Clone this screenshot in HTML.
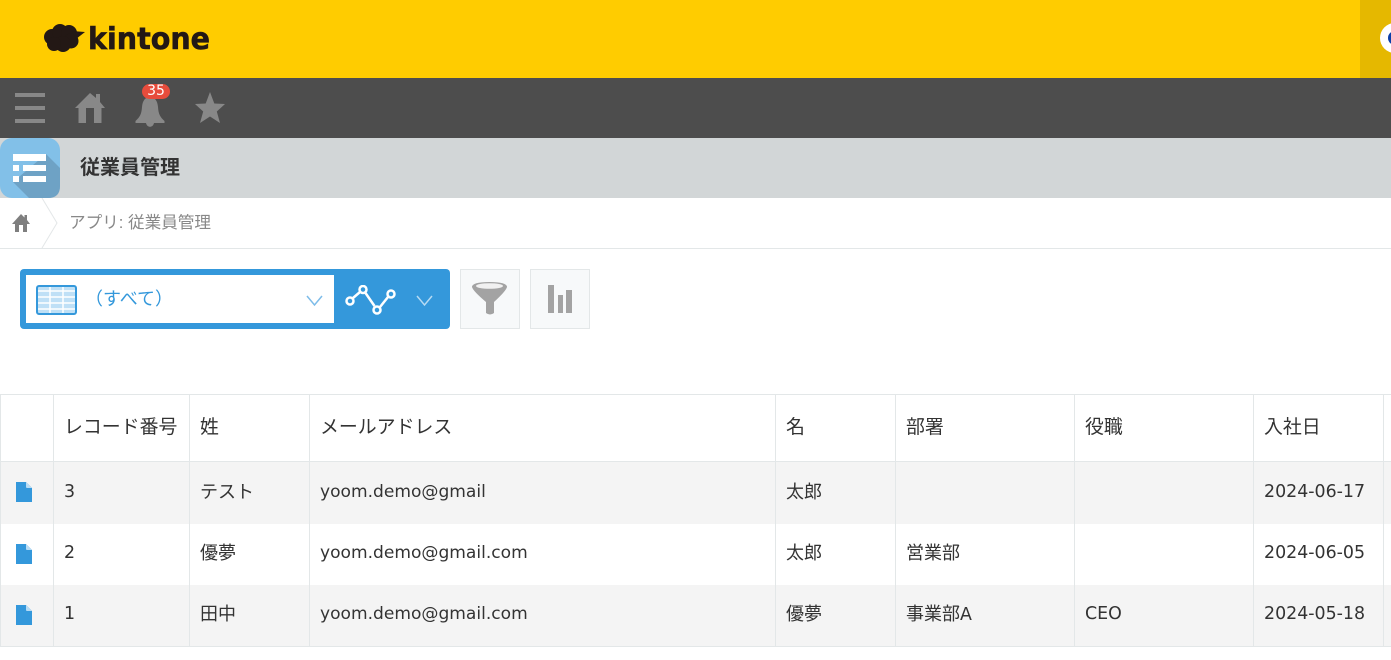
<!DOCTYPE html>
<html lang="ja"><head><meta charset="utf-8"><title>従業員管理</title>
<style>
html,body{margin:0;padding:0;width:1391px;height:660px;overflow:hidden;background:#fff;font-family:"Liberation Sans","Noto Sans CJK JP",sans-serif;color:#333}
.a{position:absolute}
svg{position:absolute;display:block}
table{position:absolute;left:0;top:394px;border-collapse:collapse;table-layout:fixed;width:1391px;font-size:18px;font-family:"DejaVu Sans","Noto Sans CJK JP",sans-serif}
td{border-left:1px solid #e3e7e8;border-right:1px solid #e3e7e8;padding:0 0 0 10px;white-space:nowrap;overflow:hidden;font-weight:400;height:61px;color:#333}
td .l{font-size:17.4px;position:relative;top:-2px}
td .m{font-size:17.07px;position:relative;top:-2px}
td .c{position:relative;top:-3px}
td .c .l{top:0}
tr.f td .c{top:-2px}
tr.h td{height:67px;border-top:1px solid #e3e7e8;border-bottom:1px solid #e3e7e8;font-size:18.9px;padding-bottom:6px;box-sizing:border-box}
tr.f td{height:62px}
tr.o td{background:#f4f4f4}
tr:last-child td{border-bottom:1px solid #e3e7e8}
td:last-child{border-right:0}
td:first-child{position:relative}
</style></head><body>
<div class="a" style="left:0;top:0;width:1391px;height:78px;background:#ffcc00"></div>
<div class="a" style="left:1360px;top:0;width:31px;height:78px;background:#e5b800"></div>
<svg style="left:1360px;top:0" width="31" height="78"><circle cx="35" cy="38" r="15" fill="#fff"/><circle cx="35" cy="38" r="7" fill="#0b3ea8"/></svg>
<svg style="left:40px;top:18px" width="180" height="40" viewBox="0 0 180 40" fill="#231815">
<circle cx="12" cy="19" r="8"/><circle cx="20" cy="14" r="8"/><circle cx="29" cy="15" r="8"/><circle cx="31" cy="23" r="7.500"/><circle cx="23" cy="26" r="8"/><circle cx="14" cy="26" r="7"/>
<path d="M32 13L45 14L36 21Z"/>
<text x="48" y="31" font-family="'DejaVu Sans',sans-serif" font-weight="700" font-size="30" stroke="#231815" stroke-width=".6" textLength="122" lengthAdjust="spacingAndGlyphs">kintone</text></svg>
<div class="a" style="left:0;top:78px;width:1391px;height:60px;background:#4d4d4d"></div>
<svg style="left:0;top:78px" width="240" height="60" fill="#888">
<rect x="15" y="15" width="30" height="4"/><rect x="15" y="28" width="30" height="4"/><rect x="15" y="41" width="30" height="4"/>
<path d="M90 15L96 20V16H100V24L105 30H101.500V45H94V30H86V45H78.500V30H75Z"/>
<path d="M150 19C155 19 157.500 23 158 29C158.500 36 160 39 164.500 43V45H135.500V43C140 39 141.500 36 142 29C142.500 23 145 19 150 19Z"/><path d="M146 45H154C153 50 147 50 146 45Z"/>
<path d="M210 14L214.300 25.500L225 26L216.800 33.500L220 45L210 38.500L200 45L203.200 33.500L195 26L205.700 25.500Z"/>
</svg>
<div class="a" style="left:142px;top:84px;width:28px;height:15px;border-radius:8px;background:#e74c3c;color:#fff;font:14px/15px 'DejaVu Sans',sans-serif;text-align:center">35</div>
<div class="a" style="left:0;top:138px;width:1391px;height:60px;background:#d2d6d7"></div>
<svg style="left:0;top:138px" width="60" height="60">
<rect width="60" height="60" rx="12" fill="#82c0e8"/>
<path d="M46 16L60 30V48Q60 60 48 60H29L13 44Z" fill="#6ea2c5"/>
<g fill="#fff"><rect x="13" y="16" width="33" height="7"/><rect x="13" y="27" width="6" height="6"/><rect x="23" y="27" width="23" height="6"/><rect x="13" y="38" width="6" height="6"/><rect x="23" y="38" width="23" height="6"/></g></svg>
<div class="a" style="left:80px;top:154px;font-size:20px;line-height:29px;font-weight:700;color:#333;white-space:nowrap">従業員管理</div>
<svg style="left:0;top:198px" width="70" height="52">
<path d="M21 16L24.500 19.500V17H27V22L30 26H27V34H23V27H19V34H15V26H12Z" fill="#7f7f7f"/>
<path d="M42 0L57 25L42 50" fill="none" stroke="#e3e7e8" stroke-width="1"/></svg>
<div class="a" style="left:69px;top:211px;font-size:16.600px;line-height:23px;color:#888;white-space:nowrap">アプリ: 従業員管理</div>
<div class="a" style="left:0;top:248px;width:1391px;height:1px;background:#e3e7e8"></div>
<div class="a" style="left:20px;top:269px;width:430px;height:60px;background:#3498db;border-radius:4px"></div>
<div class="a" style="left:26px;top:275px;width:308px;height:48px;background:#fff"></div>
<svg style="left:36px;top:285px" width="41" height="30"><rect x="1" y="1" width="39" height="28" rx="2" fill="#bfe0f6" stroke="#3498db" stroke-width="2"/><path d="M2 6H39M2 12H39M2 18H39M2 24H39M14 2V28M27 2V28" stroke="#fff" stroke-width="1.500"/></svg>
<div class="a" style="left:85px;top:287px;font-size:18px;line-height:25px;color:#3498db;white-space:nowrap">（すべて）</div>
<svg style="left:300px;top:285px" width="140" height="30" fill="none">
<path d="M7 11L14.500 20L22 11" stroke="#7dbce9" stroke-width="1.500"/>
<path d="M117 11L124.500 20L132 11" stroke="#b5daf3" stroke-width="1.500"/>
<g stroke="#fff" stroke-width="2.500"><path d="M53 13L60 7M65.500 8L74.500 21M80 22L88 12"/><circle cx="50" cy="16" r="3.500"/><circle cx="63" cy="4.500" r="3.500"/><circle cx="77" cy="25" r="3.500"/><circle cx="91" cy="9" r="3.500"/></g></svg>
<div class="a" style="left:460px;top:269px;width:58px;height:58px;background:#f7f9fa;border:1px solid #e3e7e8"></div>
<svg style="left:460px;top:269px" width="60" height="60"><path d="M12 18Q12 13 29.500 13Q47 13 47 18Q46 22 34 33V44Q30 47 26 44V33Q13 22 12 18Z" fill="#a3a3a3"/><ellipse cx="29.500" cy="17" rx="13.500" ry="2.800" fill="#f1f1f1"/></svg>
<div class="a" style="left:530px;top:269px;width:58px;height:58px;background:#f7f9fa;border:1px solid #e3e7e8"></div>
<svg style="left:530px;top:269px" width="60" height="60" fill="#a3a3a3"><rect x="18" y="16" width="6" height="28"/><rect x="28" y="26" width="5" height="18"/><rect x="36" y="21" width="6" height="23"/></svg>
<table>
<colgroup><col style="width:53px"><col style="width:136px"><col style="width:120px"><col style="width:466px"><col style="width:120px"><col style="width:179px"><col style="width:179px"><col style="width:130px"><col style="width:8px"></colgroup>
<tr class="h"><td></td><td>レコード番号</td><td>姓</td><td>メールアドレス</td><td>名</td><td>部署</td><td>役職</td><td>入社日</td><td></td></tr>
<tr class="o f"><td><svg style="left:15px;top:20px" width="16" height="20"><path d="M0 0H10L16 6V20H0Z" fill="#3498db"/><path d="M10 0L16 6H11Q10 6 10 5Z" fill="#b8dcf4"/></svg></td><td><span class="l">3</span></td><td><span class="c">テスト</span></td><td><span class="m">yoom.demo@gmail</span></td><td><span class="c">太郎</span></td><td></td><td></td><td><span class="l">2024-06-17</span></td><td></td></tr>
<tr><td><svg style="left:15px;top:20px" width="16" height="20"><path d="M0 0H10L16 6V20H0Z" fill="#3498db"/><path d="M10 0L16 6H11Q10 6 10 5Z" fill="#b8dcf4"/></svg></td><td><span class="l">2</span></td><td><span class="c">優夢</span></td><td><span class="m">yoom.demo@gmail.com</span></td><td><span class="c">太郎</span></td><td><span class="c">営業部</span></td><td></td><td><span class="l">2024-06-05</span></td><td></td></tr>
<tr class="o"><td><svg style="left:15px;top:20px" width="16" height="20"><path d="M0 0H10L16 6V20H0Z" fill="#3498db"/><path d="M10 0L16 6H11Q10 6 10 5Z" fill="#b8dcf4"/></svg></td><td><span class="l">1</span></td><td><span class="c">田中</span></td><td><span class="m">yoom.demo@gmail.com</span></td><td><span class="c">優夢</span></td><td><span class="c">事業部<span class="l">A</span></span></td><td><span class="l">CEO</span></td><td><span class="l">2024-05-18</span></td><td></td></tr>
</table>
</body></html>
